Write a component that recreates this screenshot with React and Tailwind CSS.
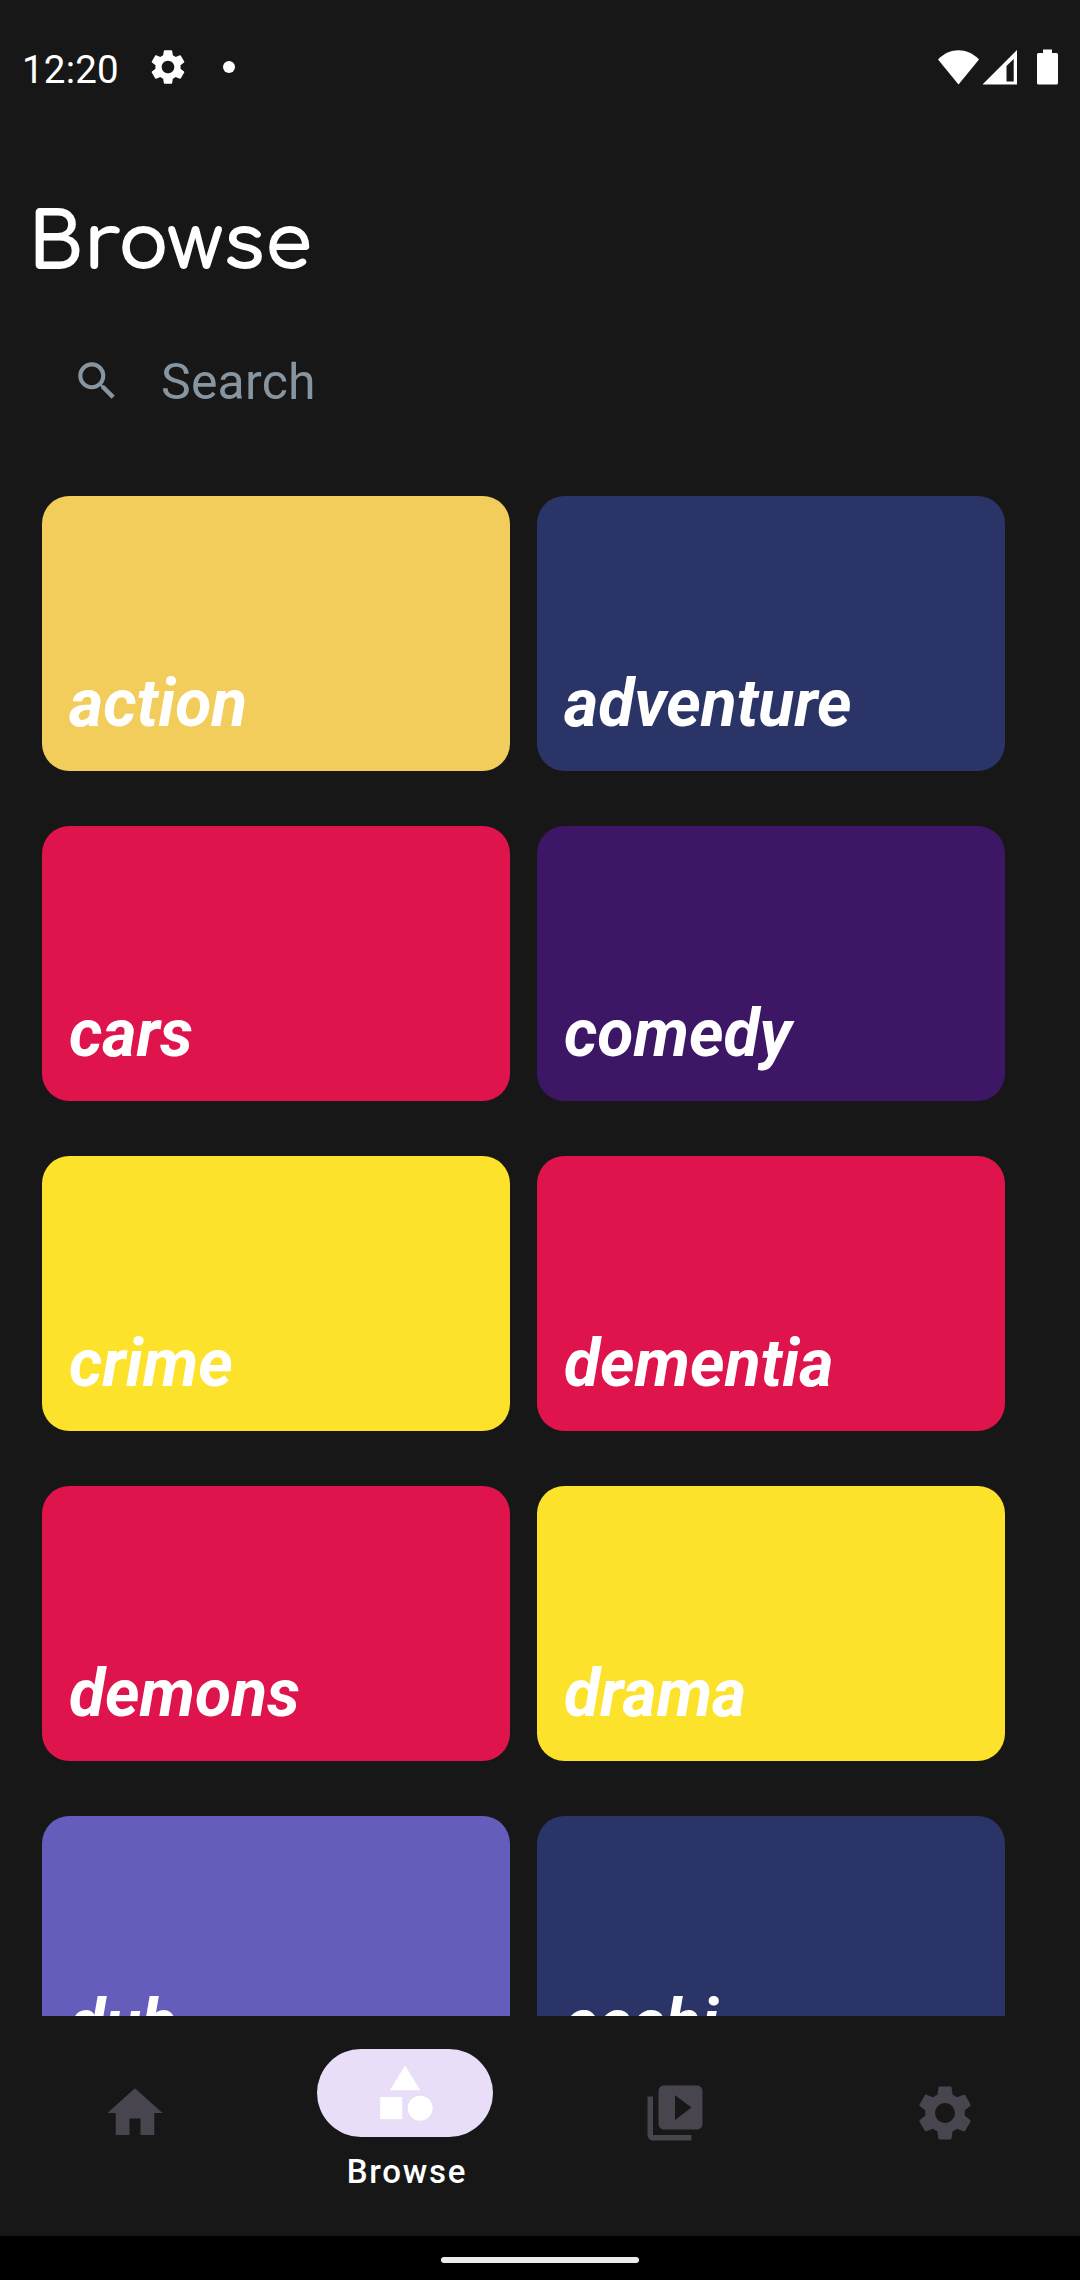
import { MdHome, MdCategory, MdVideoLibrary, MdSettings, MdSearch } from "react-icons/md";

const genres = [
  ["action", "bg-[#f2cd5c]"],
  ["adventure", "bg-[#2b3467]"],
  ["cars", "bg-[#e0144c]"],
  ["comedy", "bg-[#3d1766]"],
  ["crime", "bg-[#fce22a]"],
  ["dementia", "bg-[#e0144c]"],
  ["demons", "bg-[#e0144c]"],
  ["drama", "bg-[#fce22a]"],
  ["dub", "bg-[#655dbb]"],
  ["ecchi", "bg-[#2b3467]"],
];

function StatusBar() {
  return (
    <header className="flex h-[136px] shrink-0 items-start pt-[46px] pl-[22px] pr-[21px]">
      <span className="mt-px w-[125px] text-[38.5px] leading-[46px] tracking-[0.2px]">12:20</span>
      <MdSettings className="size-[42px]" />
      <span className="ml-[34px] mt-[15px] size-3 rounded-full bg-white" />
      <svg className="ml-auto mt-[3px] h-9 w-[121px]" viewBox="0 0 121 36" fill="white">
        <path d="M0 10.5C12-1.8 29-1.8 41 10.5L20.5 35.5Z" />
        <path fillRule="evenodd" d="M44.500 35.500L79 1V35.500ZM68.500 32.500H75.700V10L68.500 17Z" />
        <path d="M105 0.500h9v3.500h4.500q1.500 0 1.500 1.500V34q0 1.500-1.500 1.500h-18Q99 35.500 99 34V5.500Q99 4 100.500 4H105Z" />
      </svg>
    </header>
  );
}

function NavItem({ icon: Icon, label }) {
  return (
    <div className={"flex h-[220px] flex-1 flex-col items-center " + (label ? "pt-[33px]" : "pt-[53px]")}>
      <div
        className={
          "flex h-[88px] w-44 items-center justify-center rounded-full " +
          (label ? "bg-[#e8def8] text-white" : "text-[#49454f]")
        }
      >
        <Icon className="size-[66px]" />
      </div>
      {label && (
        <span className="mt-[15px] pl-1 text-[33px] font-medium leading-10 tracking-[1.75px]">{label}</span>
      )}
    </div>
  );
}

export default function App() {
  return (
    <div className="flex h-[2280px] w-[1080px] flex-col overflow-hidden bg-[#171717] font-['Roboto',sans-serif] text-white">
      <StatusBar />
      <h1 className="h-[192px] shrink-0 pl-[28px] pt-[58px] font-['Comfortaa','Quicksand','Lato',sans-serif] text-[77px] font-bold leading-[100px] tracking-[-0.2px]">
        Browse
      </h1>
      <div className="flex h-[168px] shrink-0 items-start pl-[71.500px] pt-[24px] text-[#8795a1]">
        <MdSearch className="mt-[4px] size-[50px]" />
        <span className="ml-[39.500px] text-[50px] leading-[60px] tracking-[0.2px]">Search</span>
      </div>
      <main className="grid h-[1520px] shrink-0 auto-rows-[275px] grid-cols-[468px_468px] content-start gap-x-[27px] gap-y-[55px] overflow-hidden pl-[42px]">
        {genres.map(([name, color]) => (
          <div key={name} className={"flex items-end rounded-[27.500px] pb-[28px] pl-[27px] " + color}>
            <span className="text-[66px] font-bold italic leading-[78px]">{name}</span>
          </div>
        ))}
      </main>
      <nav className="flex h-[220px] shrink-0">
        <NavItem icon={MdHome} />
        <NavItem icon={MdCategory} label="Browse" />
        <NavItem icon={MdVideoLibrary} />
        <NavItem icon={MdSettings} />
      </nav>
      <footer className="flex h-11 shrink-0 justify-center bg-black pt-[21px]">
        <div className="h-1.5 w-[198px] rounded-full bg-[#ebebeb]" />
      </footer>
    </div>
  );
}
